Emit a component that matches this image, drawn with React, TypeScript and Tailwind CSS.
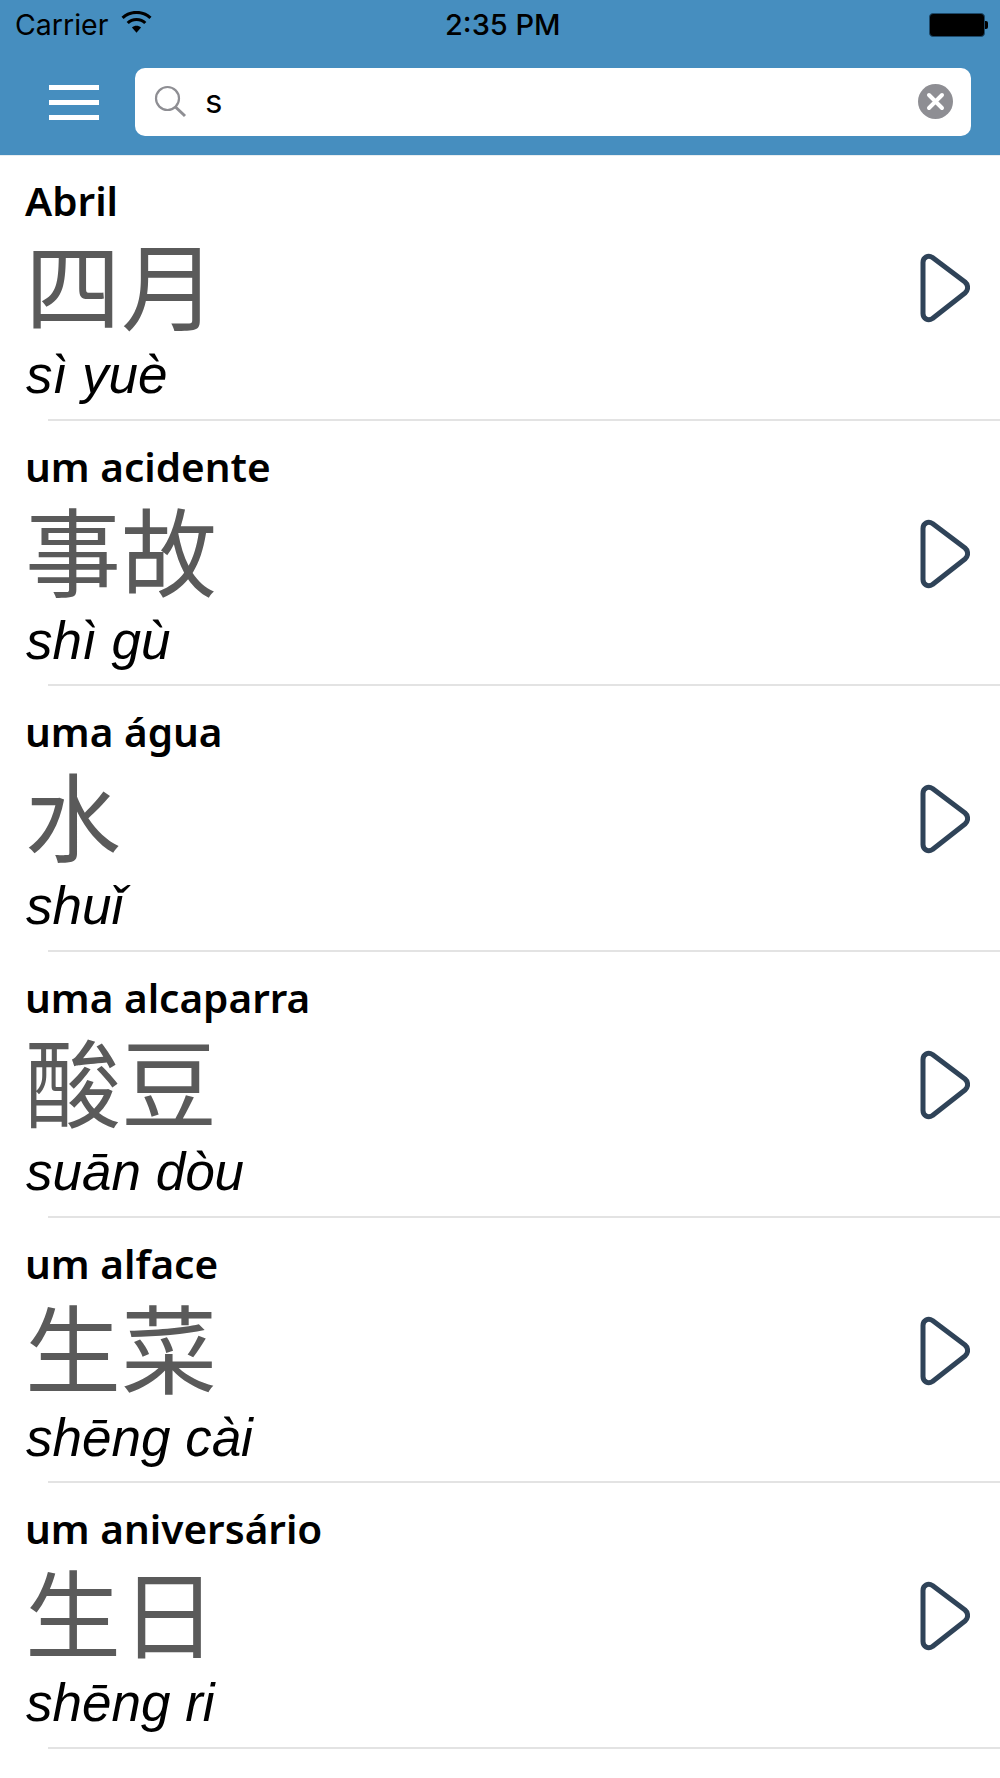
const rows = [
  { t: "Abril", z: "四月", p: "sì yuè" },
  { t: "um acidente", z: "事故", p: "shì gù" },
  { t: "uma água", z: "水", p: "shuǐ" },
  { t: "uma alcaparra", z: "酸豆", p: "suān dòu" },
  { t: "um alface", z: "生菜", p: "shēng cài" },
  { t: "um aniversário", z: "生日", p: "shēng ri" },
];

function Play() {
  return (
    <svg width="50" height="70" viewBox="0 0 50 70" fill="none">
      <path d="M3 9.5C3 4.5 8 1.5 12.5 4.5L45 29C48.5 32 48.5 37 45 40L12.5 65.5C8 68.5 3 65.5 3 60.5Z" stroke="#2f4358" strokeWidth="5" strokeLinejoin="round" />
    </svg>
  );
}

export default function App() {
  return (
    <div className="w-[1000px] h-[1778px] overflow-hidden bg-white font-['Liberation_Sans',sans-serif]">
      <header className="h-[155px] bg-[#468ebf] flex flex-col">
        <div className="h-[50px] flex items-center justify-between relative pl-[15px] pr-[13px] text-black">
          <div className="flex items-center gap-[13px] font-['Inter',sans-serif] text-[28.5px] leading-[32px]">
            <span>Carrier</span>
            <svg width="31" height="23" viewBox="0 0 30 22" className="-mt-[5px]">
              <path d="M15 21L10.6 15.8C13 13.6 17 13.6 19.4 15.8Z" fill="#000" />
              <path d="M6.5 11.5C11 7 19 7 23.5 11.5" stroke="#000" strokeWidth="3" fill="none" />
              <path d="M1.5 6.5C9 -0.5 21 -0.5 28.5 6.5" stroke="#000" strokeWidth="3" fill="none" />
            </svg>
          </div>
          <span className="absolute left-[445px] top-[9px] font-['Inter',sans-serif] font-medium text-[29px] leading-[32px]">2:35 PM</span>
          <div className="flex items-center -mt-[1px] -mr-[1px]">
            <div className="w-[56px] h-[24px] rounded-[4px] bg-black border border-[#1d4a6b]" />
            <div className="w-[3px] h-[8px] bg-black rounded-r-[2px]" />
          </div>
        </div>
        <div className="flex items-center pt-[18px]">
          <div className="w-[135px] pl-[49px] flex flex-col gap-[10px]">
            <div className="w-[50px] h-[5px] bg-white" />
            <div className="w-[50px] h-[5px] bg-white" />
            <div className="w-[50px] h-[5px] bg-white" />
          </div>
          <div className="w-[836px] h-[68px] bg-white rounded-[10px] flex items-center pl-[19px] pr-[18px]">
            <svg width="33" height="33" viewBox="0 0 33 33" fill="none" className="shrink-0 -mt-[1px]">
              <circle cx="13.5" cy="13.5" r="11.5" stroke="#8e8e93" strokeWidth="2.2" />
              <path d="M21.5 22L31 31" stroke="#8e8e93" strokeWidth="3" />
            </svg>
            <span className="ml-[18px] text-[33px] leading-none font-['Inter',sans-serif] text-black flex-1 -mt-[2px]">s</span>
            <svg width="35" height="35" viewBox="0 0 35 35" className="shrink-0 -mt-[1px]">
              <circle cx="17.5" cy="17.5" r="17.5" fill="#8e8e93" />
              <path d="M11 11L24 24M24 11L11 24" stroke="#fff" strokeWidth="4" strokeLinecap="round" />
            </svg>
          </div>
        </div>
      </header>
      <div className="h-[1px] bg-[#e8edf0]" />
      <main className="-mt-[1px]">
        {rows.map((r) => (
          <div key={r.t} className="h-[265.7px] relative flex items-center pl-[25px] pr-[30px]">
            <div className="flex-1 flex flex-col pt-[8px]">
              <div className="font-['Noto_Sans',sans-serif] font-semibold text-[40.5px] leading-[44px] text-black">{r.t}</div>
              <div className="font-['Noto_Sans_CJK_SC',sans-serif] font-normal text-[96px] leading-[118px] text-[#5a5a5a]">{r.z}</div>
              <div className="italic text-[53px] leading-[60px] text-black pl-[1px] pt-[4px]">{r.p}</div>
            </div>
            <Play />
            <div className="absolute left-[48px] right-0 bottom-0 h-[2px] bg-[#e3e3e3]" />
          </div>
        ))}
      </main>
    </div>
  );
}
